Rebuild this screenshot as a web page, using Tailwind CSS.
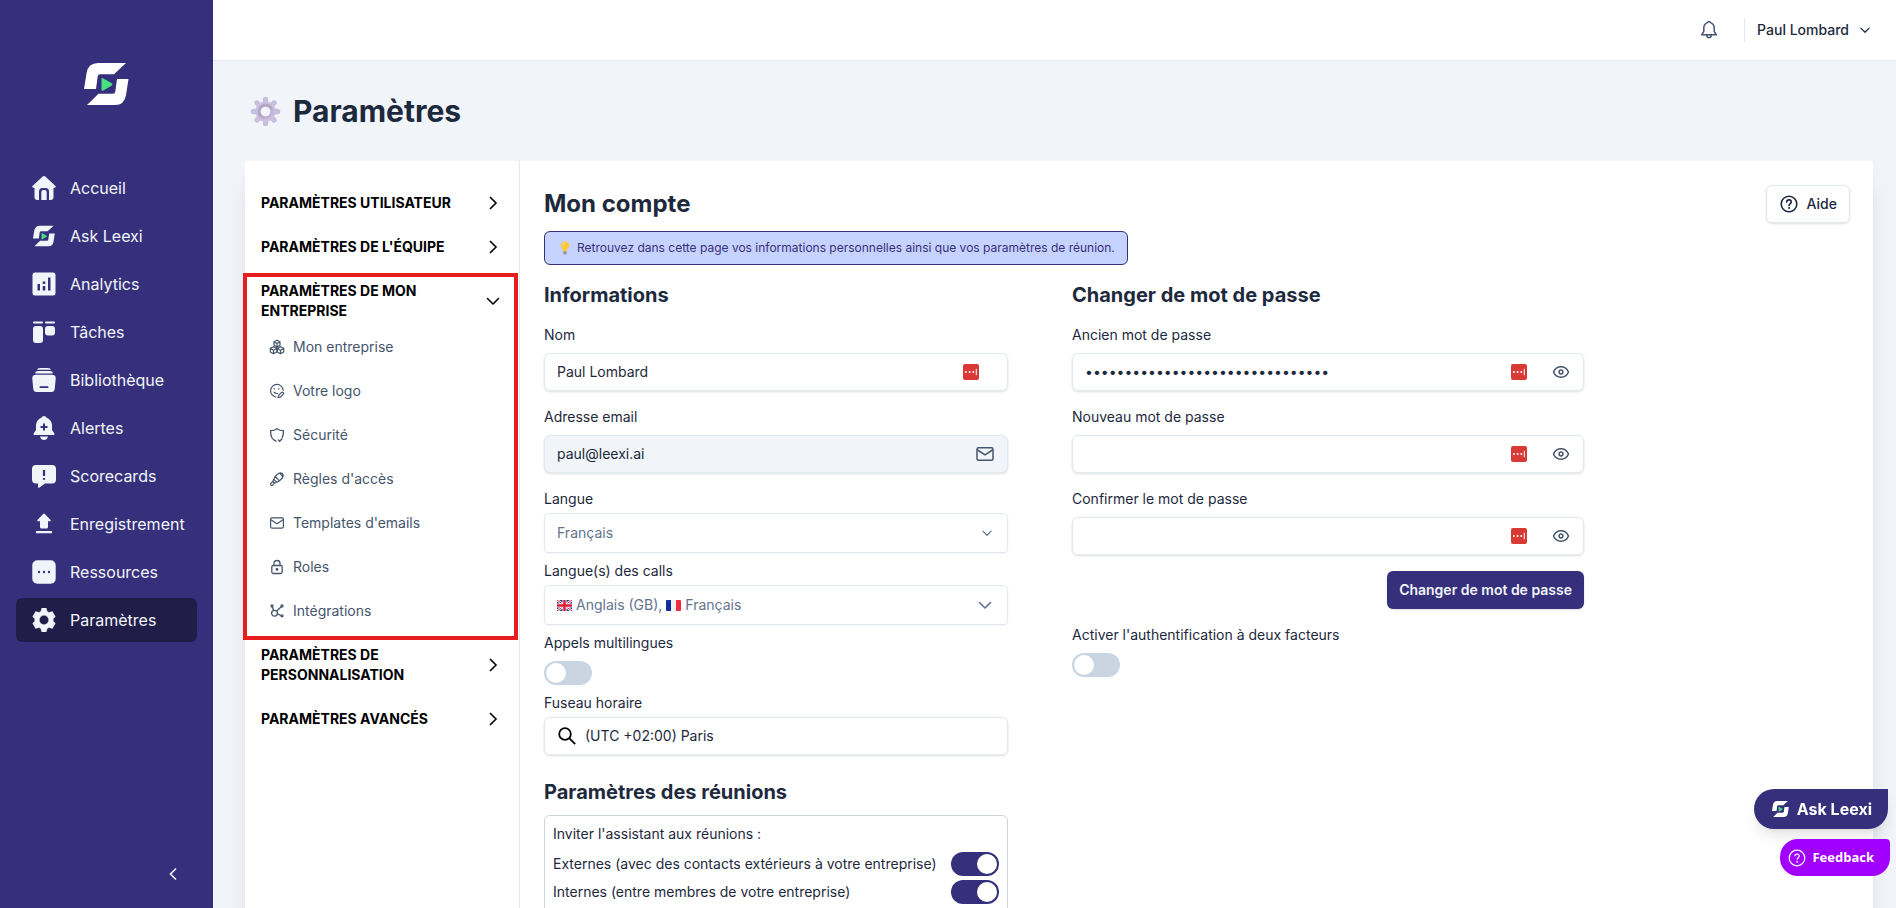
<!DOCTYPE html>
<html lang="fr">
<head>
    <meta charset="UTF-8">
    <meta name="viewport" content="width=device-width, initial-scale=1.0">
    <title>Paramètres</title>
    <script src="https://cdn.jsdelivr.net/npm/@tailwindcss/browser@4"></script>
    <style>
        body {
            font-family: Inter, "Liberation Sans", sans-serif;
        }
        input::-ms-reveal {
            display: none;
        }
    </style>
</head>
<body class="bg-slate-100 text-sm text-slate-800">
    <!-- shared icons -->
    <svg class="hidden">
        <symbol id="logo" viewBox="0 0 45 42">
            <path fill="currentColor" d="M0 26 2.6 10Q4.200 0 14 0H42L30 11.300H16Q14 11.300 13.700 13.500L12 26ZM33 16H44.500L42 32Q40.400 42 31 42H3L14.500 30.700H29Q31 30.700 31.300 28.500Z"/>
            <path fill="#4ade80" d="M17.500 16.500Q17.500 14.500 19.300 15.400L27.800 20.300Q29.300 21.400 27.800 22.400L19.300 27.400Q17.500 28.300 17.500 26.500Z"/>
        </symbol>
        <symbol id="chevron-right" viewBox="0 0 16 16">
            <path fill="none" stroke="currentColor" stroke-width="1.600" d="m5 2 6 6-6 6"/>
        </symbol>
        <symbol id="chevron-down" viewBox="0 0 16 16">
            <path fill="none" stroke="currentColor" stroke-width="1.600" stroke-linecap="round" stroke-linejoin="round" d="m2.500 5.500 5.500 5.500 5.500-5.500"/>
        </symbol>
        <symbol id="mail" viewBox="0 0 20 20">
            <g fill="none" stroke="currentColor" stroke-width="1.500" stroke-linejoin="round">
                <rect x="2" y="3.700" width="16" height="12.600" rx="1.500"/>
                <path d="m2.500 6 7.500 4.800L17.500 6"/>
            </g>
        </symbol>
        <symbol id="eye" viewBox="0 0 20 20">
            <g fill="none" stroke="currentColor" stroke-width="1.500">
                <path d="M2.500 10C4 6.500 6.800 4.800 10 4.800s6 1.700 7.500 5.200c-1.500 3.500-4.300 5.200-7.500 5.200S4 13.500 2.500 10Z"/>
                <circle cx="10" cy="10" r="1.900"/>
            </g>
        </symbol>
        <symbol id="vault" viewBox="0 0 16 16">
            <rect width="16" height="16" rx="2" fill="#d93a35"/>
            <g fill="#fff">
                <circle cx="2.900" cy="8" r="1"/>
                <circle cx="6.600" cy="8" r="1"/>
                <circle cx="10.300" cy="8" r="1"/>
                <rect x="12.800" y="4.800" width="1" height="6.400"/>
            </g>
        </symbol>
        <symbol id="help" viewBox="0 0 20 20">
            <g fill="none" stroke="currentColor" stroke-width="1.600">
                <circle cx="10" cy="10" r="7.800"/>
                <path stroke-linecap="round" d="M7.700 8.100c0-1.400 1-2.200 2.300-2.200s2.300.8 2.300 2.100c0 1.700-2.200 1.700-2.200 3.600"/>
            </g>
            <circle cx="10.100" cy="14" r="1" fill="currentColor"/>
        </symbol>
    </svg>

    <div class="flex h-screen overflow-hidden">
        <aside class="flex w-[213px] shrink-0 flex-col bg-[#36307c] px-4 text-slate-100">
            <a href="#" aria-label="Leexi" class="mx-auto mt-[63px] text-white">
                <svg class="h-[42px] w-[45px]"><use href="#logo"/></svg>
            </a>
            <nav class="mt-[61px] flex flex-col gap-1 text-base">
                <a href="#" class="flex h-11 items-center gap-3.5 rounded-md px-4">
                    <svg class="size-6 shrink-0" viewBox="0 0 24 24">
                        <path fill="currentColor" d="M10.700.6a2 2 0 0 1 2.600 0L23.500 10q.9 1.100-.3 1.600L21.500 12v9q0 3-3 3h-13q-3 0-3-3v-9L.8 11.600Q-.4 11.100.5 10Z"/>
                        <path fill="#36307c" d="M7 24v-8.500q0-3.500 3.500-3.500h3q3.500 0 3.500 3.500V24Z"/>
                        <path fill="currentColor" d="M9.300 24v-8q0-2 2-2h1.400q2 0 2 2v8Z"/>
                    </svg>
                    Accueil
                </a>
                <a href="#" class="flex h-11 items-center gap-3.5 rounded-md px-4">
                    <svg class="size-6 shrink-0 p-px"><use href="#logo"/></svg>
                    Ask Leexi
                </a>
                <a href="#" class="flex h-11 items-center gap-3.5 rounded-md px-4">
                    <svg class="size-6 shrink-0" viewBox="0 0 24 24">
                        <rect x=".5" y=".5" width="23" height="23" rx="2.500" fill="currentColor"/>
                        <path fill="#36307c" d="M5.500 12H8v6.500H5.500zM10.700 9.500h2.600V12h-2.600zM10.700 14h2.600v4.500h-2.600zM16 5.500h2.500v13H16z"/>
                    </svg>
                    Analytics
                </a>
                <a href="#" class="flex h-11 items-center gap-3.5 rounded-md px-4">
                    <svg class="size-6 shrink-0" viewBox="0 0 24 24" fill="currentColor">
                        <rect x="1" y="1.500" width="10" height="2" rx="1"/>
                        <rect x="13" y="1.500" width="10" height="2" rx="1"/>
                        <rect x="1" y="6" width="10" height="17" rx="3"/>
                        <rect x="13" y="6" width="10" height="9.500" rx="3"/>
                    </svg>
                    Tâches
                </a>
                <a href="#" class="flex h-11 items-center gap-3.5 rounded-md px-4">
                    <svg class="size-6 shrink-0" viewBox="0 0 24 24" fill="currentColor">
                        <path d="M5 1.800Q5.500 0 8 0h8q2.500 0 3 1.800ZM3 5.400Q3.300 3 6 3h12q2.700 0 3 2.400Z"/>
                        <path d="M.3 11Q0 6.800 4 6.800h16q4 0 3.700 4.200l-1 10q-.3 3-3.200 3h-15q-2.900 0-3.200-3Z"/>
                        <rect x="7.500" y="18.300" width="9" height="1.800" rx=".9" fill="#36307c"/>
                    </svg>
                    Bibliothèque
                </a>
                <a href="#" class="flex h-11 items-center gap-3.5 rounded-md px-4">
                    <svg class="size-6 shrink-0" viewBox="0 0 24 24" fill="currentColor">
                        <path d="M12 0q1.800 0 2.400 1.600Q19 3.500 20 8.500V14l2.400 3.500q.7 1.500-.9 1.500h-19q-1.600 0-.9-1.500L4 14V8.500q1-5 5.600-6.900Q10.200 0 12 0ZM8 20.500h8q-1 3.500-4 3.500t-4-3.500Z"/>
                        <path d="M12 7.500v7M8.500 11h7" stroke="#36307c" stroke-width="2"/>
                    </svg>
                    Alertes
                </a>
                <a href="#" class="flex h-11 items-center gap-3.5 rounded-md px-4">
                    <svg class="size-6 shrink-0" viewBox="0 0 24 24" fill="currentColor">
                        <path d="M4 1h16q4 0 4 4v10.500q0 4-4 4h-7l-5.500 4q-1.500.7-1.500-.8v-3.200H4q-4 0-4-4V5q0-4 4-4Z"/>
                        <path d="M12 6v6M12 14v1.800" stroke="#36307c" stroke-width="2.200"/>
                    </svg>
                    Scorecards
                </a>
                <a href="#" class="flex h-11 items-center gap-3.5 rounded-md pl-4">
                    <svg class="size-6 shrink-0" viewBox="0 0 24 24" fill="currentColor">
                        <path d="M11.200 2q.8-.8 1.600 0l5.800 6q.8 1-.4 1.200H16V15q0 1.500-1.500 1.500h-5Q8 16.500 8 15V9.200H5.800Q4.600 9 5.400 8Z"/>
                        <rect x="4" y="19" width="16" height="2.200" rx=".5"/>
                    </svg>
                    Enregistrement
                </a>
                <a href="#" class="flex h-11 items-center gap-3.5 rounded-md px-4">
                    <svg class="size-6 shrink-0" viewBox="0 0 24 24" fill="currentColor">
                        <rect x=".3" y=".3" width="23.400" height="23.400" rx="5"/>
                        <g fill="#36307c">
                            <circle cx="7" cy="12" r="1.200"/>
                            <circle cx="12" cy="12" r="1.200"/>
                            <circle cx="17" cy="12" r="1.200"/>
                        </g>
                    </svg>
                    Ressources
                </a>
                <a href="#" class="flex h-11 items-center gap-3.5 rounded-md bg-[#211d49] px-4">
                    <svg class="size-6 shrink-0" viewBox="0 0 24 24" fill="currentColor">
                        <path fill-rule="evenodd" d="M9.800 0h4.400l.9 3.300 1.900 1.100 3.300-.9 3 5.100-2.100 2.300v2.200l2.100 2.300-3 5.100-3.300-.9-1.900 1.100-.9 3.300H9.800l-.9-3.300L7 19.600l-3.300.9-3-5.100 2.100-2.300v-2.200L.7 8.600l3-5.100 3.300.9 1.900-1.100ZM12 7.300a4.700 4.700 0 1 0 0 9.400 4.700 4.700 0 0 0 0-9.400Z" stroke="currentColor" stroke-width=".4" stroke-linejoin="round"/>
                    </svg>
                    Paramètres
                </a>
            </nav>
            <button class="mt-auto mr-4 mb-[26px] self-end" aria-label="Réduire le menu">
                <svg class="size-4" viewBox="0 0 16 16"><path fill="none" stroke="currentColor" stroke-width="1.600" d="M11 2.500 5.500 8l5.500 5.500"/></svg>
            </button>
        </aside>

        <div class="flex min-w-0 flex-1 flex-col">
            <header class="flex h-[61px] shrink-0 items-center justify-end border-b border-slate-200 bg-white pr-[25px]">
                <button aria-label="Notifications" class="mr-[25px] text-slate-600">
                    <svg class="size-5" viewBox="0 0 20 20" fill="none" stroke="currentColor" stroke-width="1.500" stroke-linejoin="round">
                        <path d="M10 1.500c.8 0 1.300.5 1.500 1.100C13.700 3.400 15.200 5.200 15.200 8v3.500l2.200 3.300H2.600l2.200-3.300V8c0-2.800 1.500-4.600 3.700-5.400.2-.6.700-1.100 1.500-1.100ZM7.700 15c0 1.600 1 2.600 2.300 2.600s2.300-1 2.300-2.600"/>
                    </svg>
                </button>
                <button class="flex h-6 items-center gap-2.5 border-l border-slate-200 pl-3 font-medium">
                    Paul Lombard
                    <svg class="size-3"><use href="#chevron-down"/></svg>
                </button>
            </header>

            <main class="min-h-0 flex-1 overflow-y-auto pr-[23px] pl-8 [scrollbar-width:none]">
                <div class="flex h-[100px] items-center gap-3">
                    <svg class="ml-[5px] size-[31px]" viewBox="0 0 32 32">
                        <defs>
                            <linearGradient id="gear" x1="0" y1="0" x2="1" y2="1">
                                <stop offset="0" stop-color="#b9a9c9"/>
                                <stop offset=".5" stop-color="#b3a5c4"/>
                                <stop offset="1" stop-color="#cfc0e6"/>
                            </linearGradient>
                        </defs>
                        <g stroke="#cabde0" stroke-width="5.500" stroke-linecap="round">
                            <path d="M16 3.500v25M3.500 16h25M7.200 7.200l17.600 17.600M24.800 7.200 7.200 24.800"/>
                        </g>
                        <circle cx="16" cy="16" r="10.500" fill="#cdc1df"/>
                        <circle cx="16" cy="16" r="8.300" fill="url(#gear)"/>
                        <circle cx="16" cy="16" r="5" fill="#f1f5f9"/>
                    </svg>
                    <h1 class="text-3xl font-bold">Paramètres</h1>
                </div>

                <div class="flex min-h-full rounded-xs bg-white shadow-xl">
                    <div class="w-[275px] shrink-0 border-r border-slate-200 pt-5 text-black">
                        <button class="flex w-full items-center justify-between px-4 py-3 text-left font-bold">
                            PARAMÈTRES UTILISATEUR
                            <svg class="mr-0.5 size-4"><use href="#chevron-right"/></svg>
                        </button>
                        <button class="flex w-full items-center justify-between px-4 py-3 text-left font-bold">
                            PARAMÈTRES DE L'ÉQUIPE
                            <svg class="mr-0.5 size-4"><use href="#chevron-right"/></svg>
                        </button>
                        <div class="relative">
                            <div class="pointer-events-none absolute top-1 -bottom-[7px] -left-0.5 w-[275px] border-4 border-[#e81e1e]"></div>
                            <button class="flex w-full items-center justify-between px-4 pt-3 pb-1 text-left font-bold">
                                <span class="w-[180px]">PARAMÈTRES DE MON ENTREPRISE</span>
                                <svg class="mr-0.5 size-4"><use href="#chevron-down"/></svg>
                            </button>
                            <ul class="text-slate-600">
                                <li><a href="#" class="flex h-11 items-center gap-2 px-6">
                                    <svg class="size-4" viewBox="0 0 16 16" fill="none" stroke="currentColor" stroke-width="1.200" stroke-linejoin="round">
                                        <path d="m8 1.200 3 1.600v3.400L8 7.900 5 6.200V2.800ZM5 2.900l3 1.600 3-1.600M8 4.500v3.400M4.500 7.700l3.200 1.700v3.500l-3.200 1.800-3.200-1.800V9.400ZM1.300 9.500l3.200 1.700 3.200-1.700M4.500 11.200v3.500M11.500 7.700l3.200 1.700v3.500l-3.200 1.800-3.200-1.800V9.400ZM8.300 9.500l3.200 1.700 3.200-1.700M11.500 11.200v3.500"/>
                                    </svg>
                                    Mon entreprise
                                </a></li>
                                <li><a href="#" class="flex h-11 items-center gap-2 px-6">
                                    <svg class="size-4" viewBox="0 0 16 16" fill="none" stroke="currentColor" stroke-width="1.200" stroke-linecap="round">
                                        <path d="M7 14A6.300 6.300 0 1 1 14.200 7.200M5.200 5.500v.6M9.800 5.500v.6M5 9.200q1.300 1.500 3.500 1.300"/>
                                        <path d="m9.700 12.200 2.900-2.800q1-.6 1.700.1t0 1.700l-2.800 2.900-2.300.4Z"/>
                                    </svg>
                                    Votre logo
                                </a></li>
                                <li><a href="#" class="flex h-11 items-center gap-2 px-6">
                                    <svg class="size-4" viewBox="0 0 16 16" fill="none" stroke="currentColor" stroke-width="1.300" stroke-linecap="round">
                                        <path d="M7 14.200C3.500 12.500 1.700 10 1.700 6V3.700Q5.500 3.700 8 1.700q2.500 2 6.300 2V6q0 2.500-1.200 4.500M9.500 13l1.200 1.200 2.300-2.500"/>
                                    </svg>
                                    Sécurité
                                </a></li>
                                <li><a href="#" class="flex h-11 items-center gap-2 px-6">
                                    <svg class="size-4" viewBox="0 0 16 16" fill="none" stroke="currentColor" stroke-width="1.200" stroke-linejoin="round">
                                        <path d="M8.500 3.200Q11 .8 13.400 2.600q1.800 2.400-.6 4.900L10.500 9.800 6.200 5.500ZM10.500 2.200l3.300 3.300M6.200 5.500 4.800 8.300l2.900 2.900 2.800-1.400M4.800 8.300 3.800 10.500l1.700 1.700 2.200-1M3.800 10.500l-2 2q-.6 1 .1 1.700t1.600.1l2-2.100M7.600 7l1.400 1.400"/>
                                    </svg>
                                    Règles d'accès
                                </a></li>
                                <li><a href="#" class="flex h-11 items-center gap-2 px-6">
                                    <svg class="size-4"><use href="#mail"/></svg>
                                    Templates d'emails
                                </a></li>
                                <li><a href="#" class="flex h-11 items-center gap-2 px-6">
                                    <svg class="size-4" viewBox="0 0 16 16" fill="none" stroke="currentColor" stroke-width="1.300">
                                        <rect x="2.800" y="6.500" width="10.400" height="8" rx="1.500"/>
                                        <path d="M5 6.500V4.300q0-2.800 3-2.800t3 2.800v2.200"/>
                                        <circle cx="8" cy="10.400" r=".8" fill="currentColor"/>
                                    </svg>
                                    Roles
                                </a></li>
                                <li><a href="#" class="flex h-11 items-center gap-2 px-6">
                                    <svg class="size-4" viewBox="0 0 16 16" fill="none" stroke="currentColor" stroke-width="1.300">
                                        <circle cx="5.500" cy="10.300" r="2.900"/>
                                        <circle cx="3" cy="3" r="1"/>
                                        <circle cx="13" cy="3" r="1"/>
                                        <circle cx="13" cy="12.800" r="1"/>
                                        <path d="m3.400 4 1.200 3.500M12.200 3.700 7.500 8.300M8.400 10.800l3.600 1.700"/>
                                    </svg>
                                    Intégrations
                                </a></li>
                            </ul>
                        </div>
                        <button class="flex w-full items-center justify-between px-4 py-3 text-left font-bold">
                            <span class="w-[180px]">PARAMÈTRES DE PERSONNALISATION</span>
                            <svg class="mr-0.5 size-4"><use href="#chevron-right"/></svg>
                        </button>
                        <button class="flex w-full items-center justify-between px-4 py-3 text-left font-bold">
                            PARAMÈTRES AVANCÉS
                            <svg class="mr-0.5 size-4"><use href="#chevron-right"/></svg>
                        </button>
                    </div>

                    <div class="min-w-0 flex-1 py-6 pr-[23px] pl-6">
                        <div class="flex items-center justify-between">
                            <h2 class="text-2xl font-bold">Mon compte</h2>
                            <button class="flex h-[38px] items-center gap-2 rounded-md border border-slate-200 px-3 font-medium shadow-sm">
                                <svg class="size-5"><use href="#help"/></svg>
                                Aide
                            </button>
                        </div>
                        <p class="mt-2 flex h-[34px] w-fit items-center gap-1 rounded-md border border-[#36307c] bg-indigo-200 px-3 text-xs text-[#36307c]">
                            <svg class="size-4" viewBox="0 0 16 16">
                                <path fill="#fcc934" d="M8 1.500q4 .3 4 4 0 1.700-1.200 3-.8 1-.8 2.500H6q0-1.500-.8-2.500Q4 7.200 4 5.500q0-3.700 4-4Z"/>
                                <path fill="#fde38a" d="M6 3.500q1.500-1.300 2.500-.5Q6.500 4 6.300 6.500 5 5 6 3.500Z"/>
                                <rect x="6.300" y="11" width="3.400" height="3.500" rx="1" fill="#9d93a8"/>
                            </svg>
                            Retrouvez dans cette page vos informations personnelles ainsi que vos paramètres de réunion.
                        </p>

                        <div class="mt-4 grid grid-cols-[464px_minmax(0,512px)] gap-16">
                            <section>
                                <h3 class="text-xl font-bold">Informations</h3>
                                <label for="nom" class="mt-4 block">Nom</label>
                                <div class="mt-2 flex h-[38px] items-center rounded-md border border-slate-200 pr-7 pl-3 shadow-sm">
                                    <input id="nom" type="text" value="Paul Lombard" class="min-w-0 flex-1 outline-none">
                                    <svg class="size-4"><use href="#vault"/></svg>
                                </div>

                                <label for="email" class="mt-4 block">Adresse email</label>
                                <div class="mt-2 flex h-[38px] items-center rounded-md border border-slate-200 bg-slate-100 px-3 shadow-sm">
                                    <input id="email" type="email" value="paul@leexi.ai" readonly class="min-w-0 flex-1 outline-none">
                                    <svg class="size-5 text-slate-600"><use href="#mail"/></svg>
                                </div>

                                <label for="langue" class="mt-4 block">Langue</label>
                                <div class="mt-1 grid h-10 items-center rounded-sm border border-slate-200 shadow-xs">
                                    <select id="langue" class="col-start-1 row-start-1 h-full appearance-none px-3 text-slate-500 outline-none">
                                        <option>Français</option>
                                        <option>Anglais (GB)</option>
                                    </select>
                                    <svg class="pointer-events-none col-start-1 row-start-1 mr-[14px] size-3 justify-self-end text-slate-500"><use href="#chevron-down"/></svg>
                                </div>

                                <label for="calls" class="mt-2 block">Langue(s) des calls</label>
                                <button id="calls" aria-haspopup="listbox" class="mt-1 flex h-10 w-full items-center rounded-sm border border-slate-200 px-3 text-slate-500 shadow-xs">
                                    <svg class="mr-1 h-[11px] w-[15px]" viewBox="0 0 30 22">
                                        <rect width="30" height="22" rx="2" fill="#1f3c88"/>
                                        <path d="m0 0 30 22M30 0 0 22" stroke="#fff" stroke-width="5"/>
                                        <path d="m0 0 30 22M30 0 0 22" stroke="#dc2640" stroke-width="2"/>
                                        <path d="M15 0v22M0 11h30" stroke="#fff" stroke-width="8"/>
                                        <path d="M15 0v22M0 11h30" stroke="#dc1f38" stroke-width="5"/>
                                    </svg>
                                    Anglais (GB),
                                    <svg class="mx-1 h-[11px] w-[15px]" viewBox="0 0 30 22">
                                        <rect width="30" height="22" rx="2" fill="#f1f1f4"/>
                                        <path fill="#102f9b" d="M2 0h8v22H2q-2 0-2-2V2q0-2 2-2Z"/>
                                        <path fill="#f02b3d" d="M20 0h8q2 0 2 2v18q0 2-2 2h-8Z"/>
                                    </svg>
                                    Français
                                    <svg class="mr-0.5 ml-auto size-4"><use href="#chevron-down"/></svg>
                                </button>

                                <label for="multi" class="mt-2 block">Appels multilingues</label>
                                <input id="multi" type="checkbox" class="mt-2 block h-6 w-12 appearance-none rounded-full bg-slate-300 p-0.5 before:block before:size-5 before:rounded-full before:bg-white checked:bg-[#36307c] checked:before:ml-6">

                                <label for="fuseau" class="mt-2 block">Fuseau horaire</label>
                                <div class="mt-1 flex h-[38px] items-center gap-2 rounded-md border border-slate-200 px-3 shadow-sm">
                                    <svg class="size-5 text-black" viewBox="0 0 20 20" fill="none" stroke="currentColor" stroke-width="1.800">
                                        <circle cx="8" cy="8" r="5.800"/>
                                        <path d="m12.200 12.200 6 6"/>
                                    </svg>
                                    <input id="fuseau" type="text" value="(UTC +02:00) Paris" class="min-w-0 flex-1 outline-none">
                                </div>

                                <h3 class="mt-[23px] text-xl font-bold">Paramètres des réunions</h3>
                                <div class="mt-[9px] rounded-md border border-slate-300 p-2">
                                    <p>Inviter l'assistant aux réunions :</p>
                                    <div class="mt-2 flex items-center justify-between">
                                        <label for="externes">Externes (avec des contacts extérieurs à votre entreprise)</label>
                                        <input id="externes" type="checkbox" checked class="block h-6 w-12 appearance-none rounded-full bg-slate-300 p-0.5 before:block before:size-5 before:rounded-full before:bg-white checked:bg-[#36307c] checked:before:ml-6">
                                    </div>
                                    <div class="mt-1 flex items-center justify-between">
                                        <label for="internes">Internes (entre membres de votre entreprise)</label>
                                        <input id="internes" type="checkbox" checked class="block h-6 w-12 appearance-none rounded-full bg-slate-300 p-0.5 before:block before:size-5 before:rounded-full before:bg-white checked:bg-[#36307c] checked:before:ml-6">
                                    </div>
                                </div>
                            </section>

                            <section>
                                <h3 class="text-xl font-bold">Changer de mot de passe</h3>
                                <label for="ancien" class="mt-4 block">Ancien mot de passe</label>
                                <div class="mt-2 flex h-[38px] items-center rounded-md border border-slate-200 px-3 shadow-sm">
                                    <input id="ancien" type="password" value="abcdefghijklmnopqrstuvwxyzabcde" class="min-w-0 flex-1 outline-none">
                                    <svg class="mr-6 size-4"><use href="#vault"/></svg>
                                    <button aria-label="Afficher"><svg class="size-5 text-slate-600"><use href="#eye"/></svg></button>
                                </div>

                                <label for="nouveau" class="mt-4 block">Nouveau mot de passe</label>
                                <div class="mt-2 flex h-[38px] items-center rounded-md border border-slate-200 px-3 shadow-sm">
                                    <input id="nouveau" type="password" class="min-w-0 flex-1 outline-none">
                                    <svg class="mr-6 size-4"><use href="#vault"/></svg>
                                    <button aria-label="Afficher"><svg class="size-5 text-slate-600"><use href="#eye"/></svg></button>
                                </div>

                                <label for="confirmer" class="mt-4 block">Confirmer le mot de passe</label>
                                <div class="mt-2 flex h-[38px] items-center rounded-md border border-slate-200 px-3 shadow-sm">
                                    <input id="confirmer" type="password" class="min-w-0 flex-1 outline-none">
                                    <svg class="mr-6 size-4"><use href="#vault"/></svg>
                                    <button aria-label="Afficher"><svg class="size-5 text-slate-600"><use href="#eye"/></svg></button>
                                </div>

                                <button class="mt-4 ml-auto block h-[38px] rounded-md bg-[#36307c] px-3 font-semibold text-slate-100 shadow-sm">Changer de mot de passe</button>

                                <label for="deux-facteurs" class="mt-4 block">Activer l'authentification à deux facteurs</label>
                                <input id="deux-facteurs" type="checkbox" class="mt-2 block h-6 w-12 appearance-none rounded-full bg-slate-300 p-0.5 before:block before:size-5 before:rounded-full before:bg-white checked:bg-[#36307c] checked:before:ml-6">
                            </section>
                        </div>
                    </div>
                </div>
            </main>
        </div>
    </div>

    <!-- floating buttons -->
    <button class="fixed right-2 bottom-[79px] flex h-10 items-center gap-2 rounded-l-[20px] rounded-br-[20px] bg-[#36307c] px-4 text-base font-bold text-white shadow-lg">
        <svg class="ml-0.5 h-4 w-[17px]"><use href="#logo"/></svg>
        Ask Leexi
    </button>
    <button class="fixed right-[6px] bottom-8 flex h-[37px] items-center gap-1.5 rounded-l-[18px] rounded-tr-sm rounded-br-[18px] bg-[#a100ff] pr-4 pl-2 font-['Open_Sans'] text-[13px] font-bold text-white">
        <svg class="size-[18px]" viewBox="0 0 18 18">
            <g fill="none" stroke="currentColor" stroke-width="1.200">
                <circle cx="9" cy="9" r="7.800"/>
                <path d="M6.800 7.300c0-1.300.9-2.200 2.200-2.200s2.200.8 2.200 2c0 1.600-2.100 1.700-2.100 3.700"/>
            </g>
            <circle cx="9.100" cy="12.800" r=".9" fill="currentColor"/>
        </svg>
        Feedback
    </button>
</body>
</html>
